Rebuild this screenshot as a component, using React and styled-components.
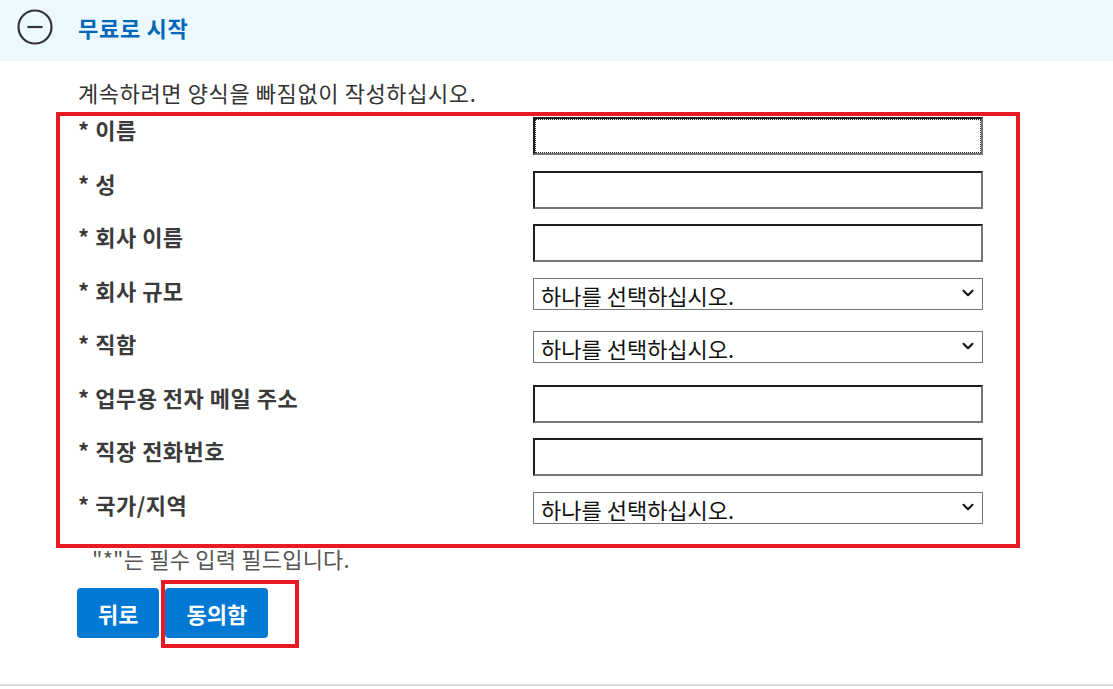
import React from 'react';
import styled, { createGlobalStyle } from 'styled-components';
import { ChevronDown } from 'lucide-react';

const FIELDS = [
  { label: '이름', type: 'text', focused: true },
  { label: '성', type: 'text' },
  { label: '회사 이름', type: 'text' },
  { label: '회사 규모', type: 'select' },
  { label: '직함', type: 'select' },
  { label: '업무용 전자 메일 주소', type: 'text' },
  { label: '직장 전화번호', type: 'text' },
  { label: '국가/지역', type: 'select' },
];

export default function App() {
  return (
    <>
      <GlobalStyle />
      <StPage>
        <StHeader>
          <StToggle aria-label="접기">
            <svg width="36" height="36" viewBox="0 0 36 36">
              <circle cx="18" cy="18" r="16.5" fill="none" stroke="#333" strokeWidth="2.2" />
              <line x1="10.5" y1="18" x2="25.5" y2="18" stroke="#333" strokeWidth="2.2" />
            </svg>
          </StToggle>
          <StTitle>무료로 시작</StTitle>
        </StHeader>

        <StMain>
          <StIntro>계속하려면 양식을 빠짐없이 작성하십시오.</StIntro>

          <StFormBox>
            {FIELDS.map((field) => (
              <StRow key={field.label}>
                <StLabel>* {field.label}</StLabel>
                {field.type === 'text' ? (
                  <StInput type="text" focused={field.focused ? 1 : 0} />
                ) : (
                  <StSelectWrap>
                    <StSelect defaultValue="">
                      <option value="">하나를 선택하십시오.</option>
                    </StSelect>
                    <StChevron>
                      <ChevronDown size={18} strokeWidth={2.8} />
                    </StChevron>
                  </StSelectWrap>
                )}
              </StRow>
            ))}
          </StFormBox>

          <StNote>"*"는 필수 입력 필드입니다.</StNote>

          <StButtons>
            <StButton>뒤로</StButton>
            <StHighlight>
              <StButton>동의함</StButton>
            </StHighlight>
          </StButtons>
        </StMain>

        <StDivider />
      </StPage>
    </>
  );
}

const GlobalStyle = createGlobalStyle`
  * {
    box-sizing: border-box;
  }
  body {
    margin: 0;
    background: #fff;
    font-family: 'Noto Sans CJK KR', 'Noto Sans', sans-serif;
    color: #333;
  }
`;

const StPage = styled.div`
  width: 1113px;
`;

const StHeader = styled.header`
  display: flex;
  align-items: center;
  gap: 25px;
  height: 61px;
  padding: 0 0 7px 17px;
  background: #ebf8fe;
`;

const StToggle = styled.div`
  display: flex;
  width: 36px;
  height: 36px;
`;

const StTitle = styled.h2`
  margin: 0;
  font-size: 22px;
  font-weight: 700;
  line-height: 28px;
  letter-spacing: 0.7px;
  color: #0067b8;
`;

const StMain = styled.main`
  padding-left: 56px;
`;

const StIntro = styled.p`
  margin: 17px 0 0 22px;
  font-size: 22px;
  line-height: 28px;
  letter-spacing: 0.6px;
  color: #333;
`;

const StFormBox = styled.div`
  margin-top: 6px;
  width: 964px;
  height: 436px;
  padding: 0 32px 0 18px;
  border: 4px solid #e81b24;
`;

const StRow = styled.div`
  display: flex;
  align-items: flex-start;
  height: 53.5px;
`;

const StLabel = styled.label`
  flex: 0 0 455px;
  margin-top: -1px;
  font-size: 22px;
  font-weight: 700;
  line-height: 28px;
  letter-spacing: 0.5px;
  color: #3b3b3b;
`;

const StInput = styled.input`
  margin-top: 1px;
  width: 450px;
  height: 38px;
  padding: 0 6px;
  border-style: solid;
  border-width: 2px;
  border-color: #1e1e1e #767676 #767676 #1e1e1e;
  outline: ${(props) => (props.focused ? '1px dotted #222' : 'none')};
  outline-offset: -3px;
  font-family: inherit;
  font-size: 18px;
  background: #fff;
`;

const StSelectWrap = styled.div`
  position: relative;
  margin-top: 1px;
  width: 450px;
  height: 32px;
`;

const StSelect = styled.select`
  appearance: none;
  width: 100%;
  height: 100%;
  padding: 0 30px 2px 7px;
  border: 1px solid #767676;
  border-radius: 0;
  background: #fff;
  font-family: inherit;
  font-size: 22px;
  color: #111;
`;

const StChevron = styled.span`
  position: absolute;
  top: 6px;
  right: 6px;
  display: flex;
  color: #111;
  pointer-events: none;
`;

const StNote = styled.p`
  margin: 0 0 0 36px;
  font-size: 22px;
  line-height: 20px;
  letter-spacing: 0.2px;
  color: #555;
`;

const StButtons = styled.div`
  display: flex;
  align-items: flex-start;
  gap: 2px;
  margin: 12px 0 0 21px;
`;

const StButton = styled.button`
  height: 50px;
  margin-top: 8px;
  padding: 0 21px;
  border: none;
  border-radius: 4px;
  background: #0078d4;
  color: #fff;
  font-family: inherit;
  font-size: 22px;
  font-weight: 700;
  cursor: pointer;
`;

const StHighlight = styled.div`
  padding: 0 27px 6px 0;
  border: 4px solid #e81b24;

  ${StButton} {
    margin-top: 4px;
  }
`;

const StDivider = styled.hr`
  margin: 36px 0 0;
  border: none;
  border-top: 2px solid #dcdcdc;
`;
